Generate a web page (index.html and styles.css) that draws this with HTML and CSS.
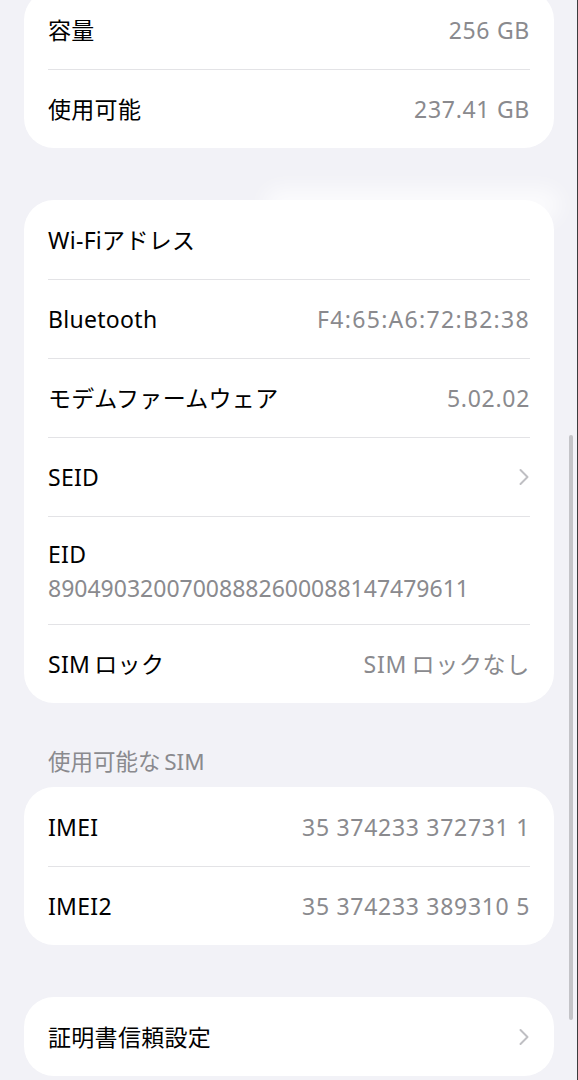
FILE: index.html
```html
<!DOCTYPE html>
<html>
<head>
    <title>情報</title>
    <link rel="stylesheet" href="styles.css">
</head>
<body>
    <div class="nav-button"></div>
    <div class="screen">
        <!-- storage -->
        <div class="group">
            <div class="row">
                <span class="label">容量</span>
                <span class="value">256 GB</span>
            </div>
            <div class="row">
                <span class="label">使用可能</span>
                <span class="value">237.41 GB</span>
            </div>
        </div>

        <!-- network -->
        <div class="group glow">
            <div class="row">
                <span class="label">Wi-Fiアドレス</span>
            </div>
            <div class="row">
                <span class="label">Bluetooth</span>
                <span class="value mac">F4:65:A6:72:B2:38</span>
            </div>
            <div class="row">
                <span class="label">モデムファームウェア</span>
                <span class="value">5.02.02</span>
            </div>
            <div class="row">
                <span class="label">SEID</span>
                <svg class="chevron" width="12" height="18" viewBox="0 0 12 18">
                    <path d="M2.5 2 L9.5 9 L2.5 16" fill="none" stroke="#bfbfc3" stroke-width="2" stroke-linecap="round" stroke-linejoin="round"/>
                </svg>
            </div>
            <div class="row tall">
                <span class="label">EID</span>
                <span class="sub">89049032007008882600088147479611</span>
            </div>
            <div class="row">
                <span class="label">SIM&#8201;ロック</span>
                <span class="value">SIM&#8201;ロックなし</span>
            </div>
        </div>

        <div class="header">使用可能な&#8201;SIM</div>
        <div class="group">
            <div class="row">
                <span class="label">IMEI</span>
                <span class="value">35 374233 372731 1</span>
            </div>
            <div class="row">
                <span class="label">IMEI2</span>
                <span class="value">35 374233 389310 5</span>
            </div>
        </div>

        <div class="group spaced">
            <div class="row">
                <span class="label">証明書信頼設定</span>
                <svg class="chevron" width="12" height="18" viewBox="0 0 12 18">
                    <path d="M2.5 2 L9.5 9 L2.5 16" fill="none" stroke="#bfbfc3" stroke-width="2" stroke-linecap="round" stroke-linejoin="round"/>
                </svg>
            </div>
        </div>
    </div>
    <div class="scroll-indicator"></div>
</body>
</html>
```

FILE: styles.css
```css
body {
    margin: 0;
    background-color: #f2f2f7;
    font-family: "Noto Sans", "Noto Sans CJK JP", sans-serif;
    font-size: 23px;
    color: #000;
    position: relative;
    overflow: hidden;
    height: 1080px;
    box-shadow: inset -1px 0 0 #3c3c3e;
}
.screen {
    display: flex;
    flex-direction: column;
    padding: 0 24px;
    margin-top: -10px;
}
.group {
    background: #fff;
    border-radius: 30px;
    padding: 0 24px;
    position: relative;
}
.group + .group {
    margin-top: 52px;
}
.group.glow::before {
    content: "";
    position: absolute;
    top: -12px;
    left: 240px;
    right: -6px;
    height: 34px;
    background: rgba(255, 255, 255, 0.7);
    filter: blur(10px);
    border-radius: 20px;
    z-index: -1;
}
.row {
    display: flex;
    justify-content: space-between;
    align-items: center;
    min-height: 78px;
    border-top: 1px solid #e3e3e6;
}
.row:first-child {
    border-top: none;
    min-height: 79px;
}
.row.tall {
    flex-direction: column;
    align-items: flex-start;
    justify-content: center;
    min-height: 107px;
}
.label {
    line-height: 30px;
    letter-spacing: 0.3px;
}
.value {
    color: #8a8a8e;
    line-height: 30px;
    letter-spacing: 0.7px;
}
.value.mac {
    letter-spacing: 1.3px;
}
.sub {
    color: #8a8a8e;
    line-height: 30px;
    margin-top: 4px;
}
.chevron {
    display: block;
}
.header {
    color: #8a8a8e;
    font-size: 22.5px;
    line-height: 28px;
    padding: 0 24px;
    margin: 45px 0 11px;
}
.nav-button {
    position: absolute;
    top: -38px;
    left: 34px;
    width: 46px;
    height: 46px;
    border-radius: 50%;
    background: #fff;
    z-index: 2;
}
.scroll-indicator {
    position: absolute;
    top: 435px;
    right: 5px;
    width: 4px;
    height: 585px;
    border-radius: 2px;
    background: #c4c4c8;
}
```
